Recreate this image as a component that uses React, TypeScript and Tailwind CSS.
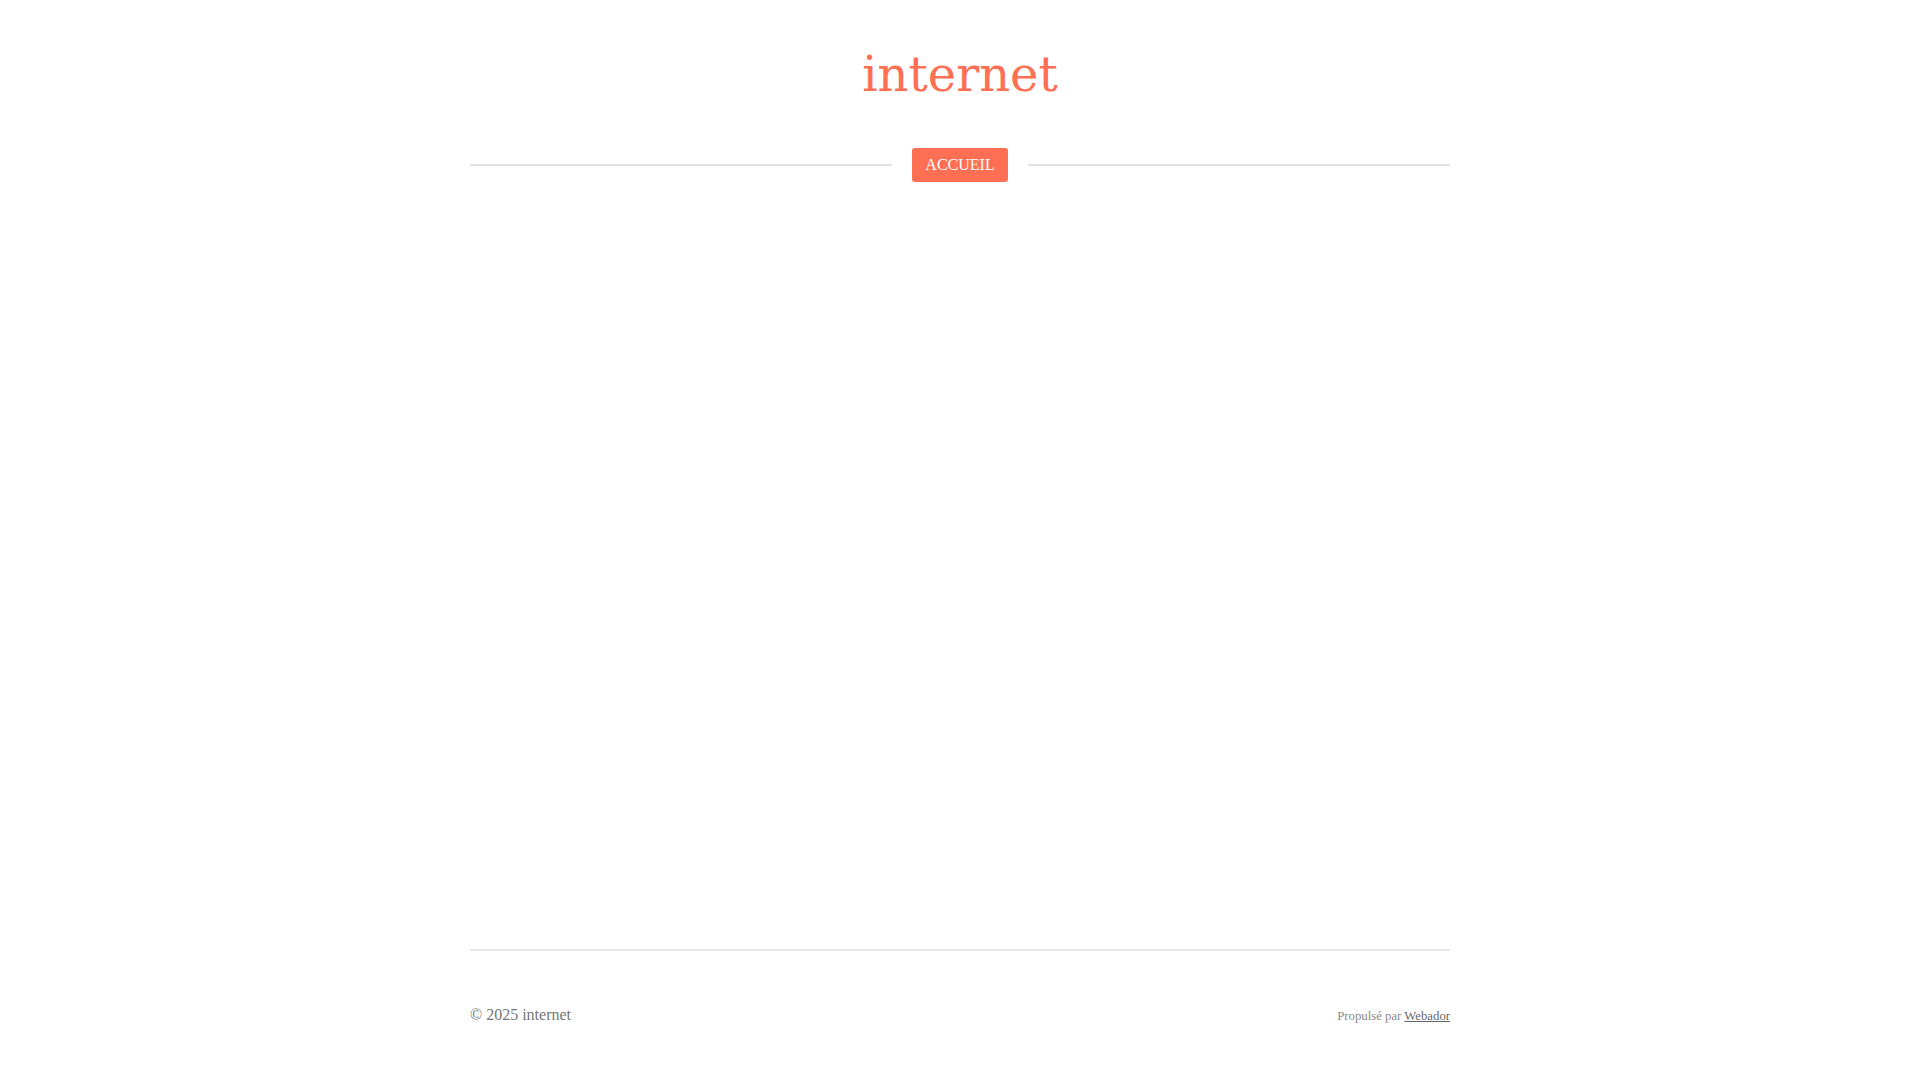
export default function App() {
  return (
    <div className="min-h-screen flex flex-col bg-white" style={{ fontFamily: '"Liberation Serif", "Times New Roman", serif' }}>
      <header className="w-[980px] mx-auto pt-[50px]">
        <h1 className="text-center text-[48px] leading-[48px] font-normal text-[#fe6f54] font-['DejaVu_Serif',serif]">
          internet
        </h1>
        {/* nav row with side rules */}
        <nav className="mt-[50px] flex items-center gap-5">
          <div className="flex-1 h-[2px] bg-[#e4e4e4]" />
          <a
            href="#"
            className="h-[34px] px-[13px] flex items-center rounded-[3px] bg-[#fe6f54] text-white text-[16px] leading-none"
          >
            ACCUEIL
          </a>
          <div className="flex-1 h-[2px] bg-[#e4e4e4]" />
        </nav>
      </header>

      <main className="flex-1" />

      <footer className="w-[980px] mx-auto border-t-2 border-[#e8e8e8] pt-[50px] pb-[52px] flex items-center justify-between">
        <span className="text-[16px] leading-6 text-[#757575]">© 2025 internet</span>
        <span className="pt-[3px] text-[12.75px] leading-6 text-[#8a8a8a]">
          Propulsé par{" "}
          <a href="#" className="underline text-[#666]">
            Webador
          </a>
        </span>
      </footer>
    </div>
  );
}
